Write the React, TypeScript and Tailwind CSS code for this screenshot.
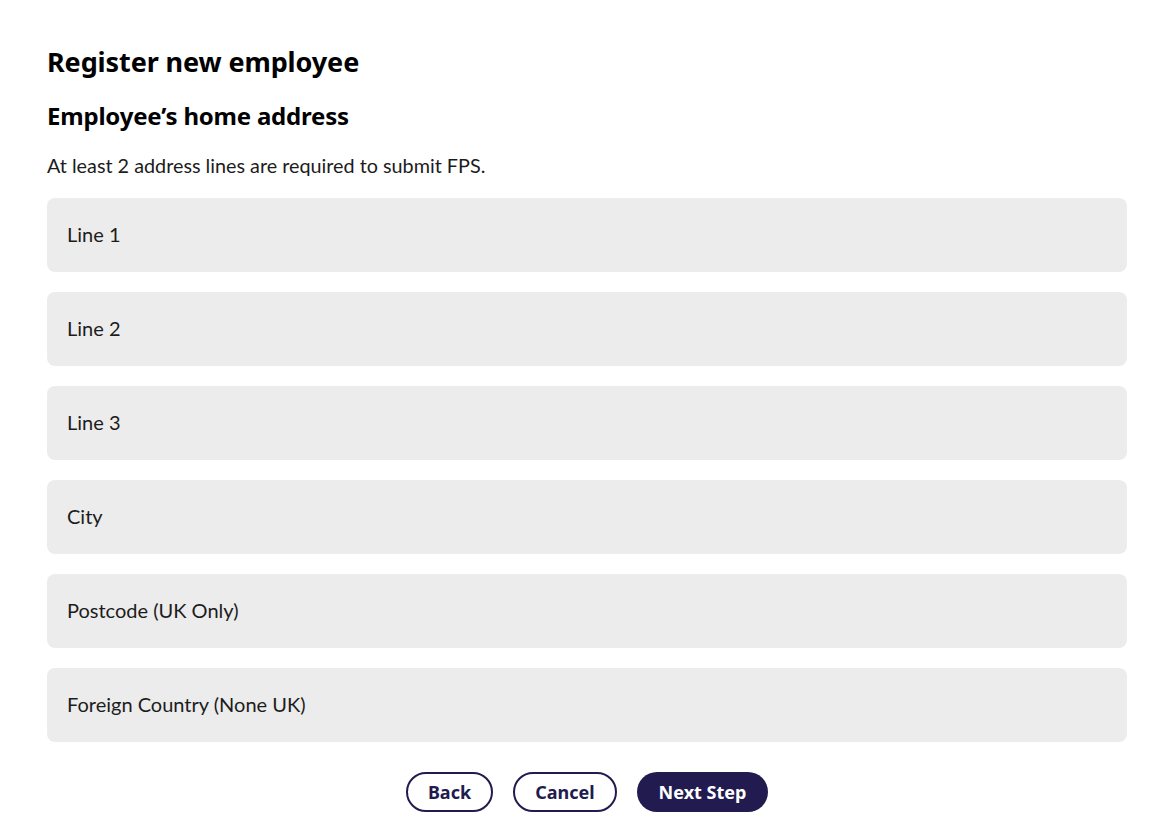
const fields = [
  'Line 1',
  'Line 2',
  'Line 3',
  'City',
  'Postcode (UK Only)',
  'Foreign Country (None UK)'
];

export default function App() {
  return (
    <div className="min-h-screen bg-white pl-[47px] pr-[45px] pt-[42px] font-['Lato',sans-serif] text-[#1c1c1c]">
      <h1 className="font-['Noto_Sans',sans-serif] text-[27px] font-bold leading-[40px] tracking-[-0.1px] text-black">
        Register new employee
      </h1>
      <h2 className="mt-[19px] font-['Noto_Sans',sans-serif] text-[24px] font-bold leading-[30px] tracking-[-0.2px] text-black">
        Employee’s home address
      </h2>
      <p className="mt-[22px] text-[19.8px] leading-[24px]">
        At least 2 address lines are required to submit FPS.
      </p>

      <form className="mt-[21px] flex flex-col gap-[20px]">
        {fields.map((label) => (
          <input
            key={label}
            type="text"
            placeholder={label}
            className="h-[74px] w-full rounded-[8px] bg-[#ececec] px-[20px] pb-[2px] text-[20px] text-[#1c1c1c] outline-none placeholder:text-[#1c1c1c]"
          />
        ))}
      </form>

      <div className="mt-[30px] flex justify-center gap-[20px] font-['Noto_Sans',sans-serif] text-[18px] font-bold">
        <button
          type="button"
          className="h-[40px] w-[87px] rounded-full border-2 border-[#211b4f] text-[#211b4f]"
        >
          Back
        </button>
        <button
          type="button"
          className="h-[40px] w-[104px] rounded-full border-2 border-[#211b4f] text-[#211b4f]"
        >
          Cancel
        </button>
        <button
          type="button"
          className="h-[40px] w-[131px] rounded-full bg-[#211b4f] text-white"
        >
          Next Step
        </button>
      </div>
    </div>
  );
}
